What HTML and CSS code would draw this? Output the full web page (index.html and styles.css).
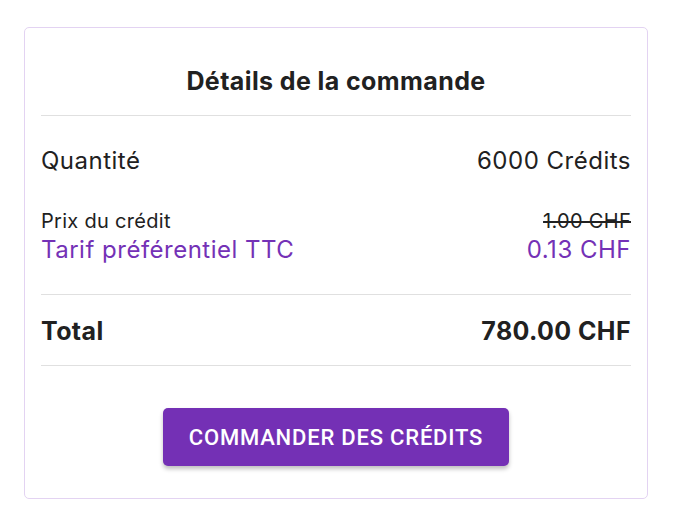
FILE: index.html
```html
<!DOCTYPE html>
<html lang="fr">
<head>
    <meta charset="UTF-8">
    <meta name="viewport" content="width=device-width, initial-scale=1.0">
    <title>Détails de la commande</title>
    <link rel="stylesheet" href="styles.css">
</head>
<body>
    <div class="card">
        <h2 class="card-title">Détails de la commande</h2>

        <div class="row row-qty">
            <span>Quantité</span>
            <span>6000 Crédits</span>
        </div>

        <div class="price">
            <div class="row row-small">
                <span>Prix du crédit</span>
                <span class="old-price">1.00 CHF</span>
            </div>
            <div class="row row-accent">
                <span>Tarif préférentiel TTC</span>
                <span>0.13 CHF</span>
            </div>
        </div>

        <div class="row row-total">
            <span>Total</span>
            <span>780.00 CHF</span>
        </div>

        <div class="actions">
            <button class="btn">Commander des crédits</button>
        </div>
    </div>
</body>
</html>
```

FILE: styles.css
```css
* {
    margin: 0;
    padding: 0;
    box-sizing: border-box;
}

body {
    font-family: Inter, "Noto Sans", sans-serif;
    background: #ffffff;
    color: #212121;
    padding: 27px 28px 0 24px;
}

.card {
    border: 1px solid #e3d3f2;
    border-radius: 5px;
    padding: 0 16px 32px;
}

.card-title {
    font-size: 25px;
    font-weight: 700;
    letter-spacing: 0.4px;
    text-align: center;
    line-height: 32px;
    padding: 37px 0 18px;
    border-bottom: 1px solid #e0e0e0;
}

.row {
    display: flex;
    justify-content: space-between;
    align-items: baseline;
}

.row-qty {
    font-size: 24px;
    letter-spacing: 0.5px;
    line-height: 32px;
    padding-top: 29px;
}

.price {
    padding: 31px 0 29px;
    border-bottom: 1px solid #e0e0e0;
}

.row-small {
    font-size: 20px;
    letter-spacing: 0.3px;
    line-height: 27px;
}

.old-price {
    text-decoration: line-through;
}

.row-accent {
    font-size: 24px;
    letter-spacing: 0.5px;
    line-height: 30px;
    color: #7431b6;
}

.row-total {
    font-size: 25px;
    font-weight: 700;
    letter-spacing: 0.4px;
    line-height: 32px;
    padding: 20px 0 18px;
    border-bottom: 1px solid #e0e0e0;
}

.actions {
    display: flex;
    justify-content: center;
    padding-top: 42px;
}

.btn {
    font-family: Roboto, sans-serif;
    font-size: 22px;
    font-weight: 500;
    letter-spacing: 0.8px;
    text-transform: uppercase;
    color: #ffffff;
    background: #7430b5;
    border: none;
    border-radius: 5px;
    padding: 0 26px;
    height: 58px;
    box-shadow: 0 3px 4px rgba(0, 0, 0, 0.25);
}
```
